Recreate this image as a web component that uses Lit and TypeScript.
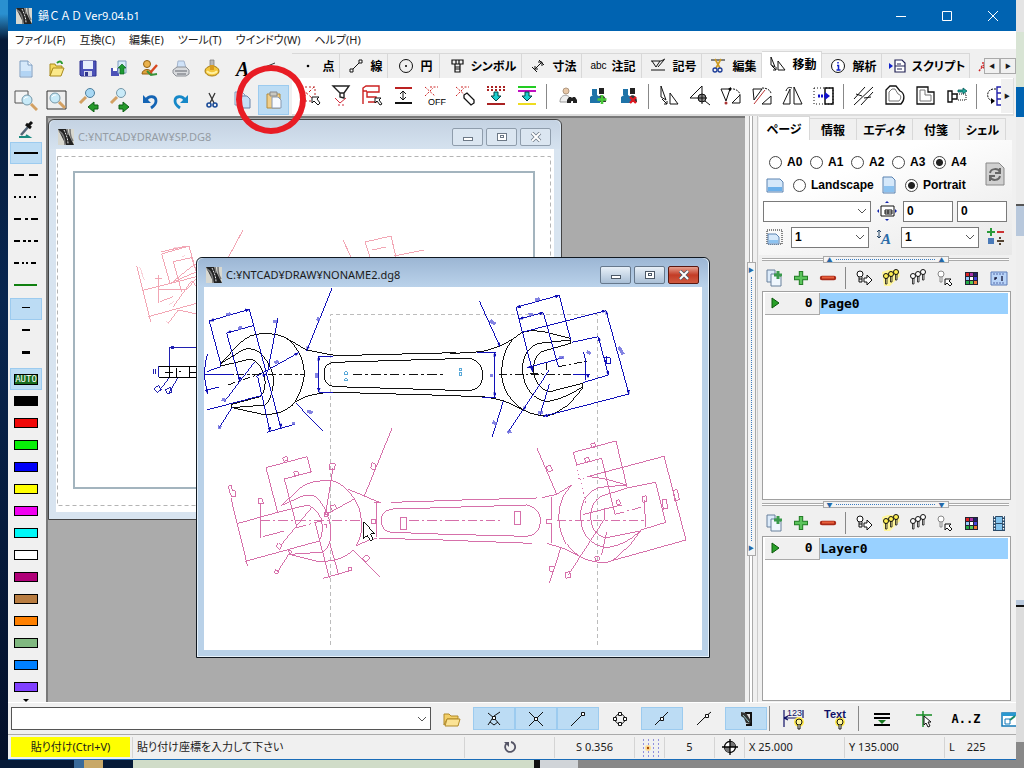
import { LitElement, html, svg, css, nothing } from "lit";
import { customElement, property, state } from "lit/decorators.js";
import { classMap } from "lit/directives/class-map.js";

const K = "#111";
const GLYPHS: Record<string, unknown> = {
  page: svg`<path d="M6 4h8l4 4v12H6z" fill="#d5e8fa" stroke="#7d9cc0"/><path d="M14 4v4h4" fill="#fff" stroke="#7d9cc0"/><path d="M7 14h10v5H7z" fill="#b2d4f4"/>`,
  open: svg`<path d="M5 7h5l1 2h6v3H8l-3 7z" fill="#f5d95e" stroke="#a98a1c"/><path d="M8 11h11l-3 8H5z" fill="#fbe98a" stroke="#a98a1c"/><path d="M12 6c3-3 5-1 5 1" fill="none" stroke="#2a9a30" stroke-width="2"/>`,
  save: svg`<path d="M4 4h16v15H5l-1-1z" fill="#4c52b8" stroke="#2c3090"/><path d="M7 4h10v8H7z" fill="#e8eefc"/><path d="M8 14h8v5H8z" fill="#d5d8ec"/><path d="M9 15h3v4H9z" fill="#30368c"/>`,
  saveup: svg`<path d="M4 11h8v8H4z" fill="#4c52b8"/><path d="M6 11h4v3H6z" fill="#fff"/><path d="M11 4h8v12h-8z" fill="#d8ebf8" stroke="#7d9cc0"/><path d="M15 7l4 4h-2v6h-4v-6h-2z" fill="#1d9a33" stroke="#0c6420" stroke-width=".7"/>`,
  user: svg`<circle cx="9" cy="7" r="3.5" fill="#eab24c" stroke="#936012"/><path d="M4 17c0-6 10-6 10 0z" fill="#e0a23c" stroke="#936012"/><path d="M12 16l7-8" stroke="#d84820" stroke-width="2.4"/><path d="M9 14l4 4 6-1" stroke="#38923a" stroke-width="2" fill="none"/>`,
  print: svg`<path d="M9 4h6l2 7H8z" fill="#cfe2f8" stroke="#a4b4cc"/><path d="M4 13l4-3h9l3 3v4l-3 2H7l-3-3z" fill="#d8dadd" stroke="#8c9096"/><path d="M6 14h12M8 17h9" stroke="#62676e"/>`,
  ring: svg`<path d="M10 3h4v6h-4z" fill="#b8b8b8" stroke="#777" stroke-width=".7"/><ellipse cx="12" cy="14" rx="7" ry="5" fill="#f3c63b" stroke="#a77b12"/><path d="M7 14c2 3 8 3 10 0" fill="none" stroke="#fff0a0" stroke-width="2"/><path d="M10 8h4v5h-4z" fill="#d89b20"/>`,
  letter: svg`<text x="5" y="19" font-size="20" font-weight="bold" font-style="italic" font-family="Liberation Serif" fill="#000">A</text>`,
  line: svg`<path d="M3 10L13 6M3 10h13" stroke="#333"/>`,
  zoomrect: svg`<path d="M1 3h13v12H1z" fill="#f4f4f4" stroke="#555"/><circle cx="13" cy="12" r="5" fill="#c8eaf8" stroke="#7597a8"/><path d="M17 16l6 6" stroke="#d3a062" stroke-width="3"/><path d="M10 11c1-2 3-2 4-2" stroke="#fff" fill="none"/>`,
  zoomall: svg`<path d="M2 3h19v18H2z" fill="#eee" stroke="#333"/><circle cx="10" cy="10" r="5" fill="#c8eaf8" stroke="#7597a8"/><path d="M14 14l6 6" stroke="#d3a062" stroke-width="3"/><path d="M7 9c1-2 3-2 4-2" stroke="#fff" fill="none"/>`,
  zoomprev: svg`<circle cx="14" cy="5" r="4.5" fill="#a8d8f4" stroke="#4e7e9c"/><path d="M10 9l-6 6" stroke="#d3a062" stroke-width="3"/><path d="M12 19l6-5v3h4v4h-4v3z" fill="#259a2b" stroke="#0d5f15"/>`,
  zoomnext: svg`<circle cx="14" cy="5" r="4.5" fill="#c8eaf8" stroke="#7597a8"/><path d="M10 9l-6 6" stroke="#d3a062" stroke-width="3"/><path d="M22 19l-6-5v3h-4v4h4v3z" fill="#259a2b" stroke="#0d5f15"/>`,
  undo: svg`<path d="M5 7v8h8z" fill="#1464b4"/><path d="M8 12c3-5 10-4 10 1 0 3-2 5-5 7" fill="none" stroke="#1464b4" stroke-width="2.8"/>`,
  redo: svg`<path d="M19 7v8h-8z" fill="#1688c8"/><path d="M16 12c-3-5-10-4-10 1 0 3 2 5 5 7" fill="none" stroke="#1688c8" stroke-width="2.8"/>`,
  cut: svg`<path d="M9 5l5 10M15 5l-5 10" stroke="#333" stroke-width="1.3"/><circle cx="9" cy="17" r="2" fill="none" stroke="#1b4c98" stroke-width="1.6"/><circle cx="15" cy="17" r="2" fill="none" stroke="#1b4c98" stroke-width="1.6"/>`,
  copy: svg`<path d="M4 4h7l3 3v10H4z" fill="#e3effb" stroke="#7d9cc0"/><path d="M9 8h7l3 3v9H9z" fill="#c5dff6" stroke="#6a83a8"/>`,
  paste: svg`<path d="M5 6h13v14H5z" fill="#f0cf8a" stroke="#b28b3c"/><path d="M8 4h7v4H8z" fill="#c8c8c0" stroke="#888"/><path d="M10 9h6l3 3v8h-9z" fill="#f7fbff" stroke="#8898b0"/>`,
  selarea: svg`<path d="M3 3h14v14H3z" fill="none" stroke="#b82828" stroke-dasharray="2 2"/><path d="M4 15l4-4M11 8l5-5M4 5l10 9" stroke="#c22" stroke-dasharray="3 2"/><path d="M14 13h7l-2 2 3 4-2 2-4-4-2 2z" fill="#fff" stroke="${K}"/>`,
  filter: svg`<path d="M4 2h16l-5 7v5l-4-1V9zM11 9h4" fill="#fff" stroke="#222" stroke-width="1.4"/><path d="M6 14l5 5 6-5" fill="none" stroke="#d02a3a"/><path d="M9 21h6" stroke="#d02a3a" stroke-dasharray="2 2"/>`,
  chain: svg`<path d="M3 20V4l3-2h13v6H7v5h9v5H8M3 7h4" fill="none" stroke="#cc2020" stroke-width="1.4"/><path d="M15 14h6l-2 2 3 4-2 1-3-4-2 2z" fill="#fff" stroke="${K}"/>`,
  vspace: svg`<path d="M4 4h17" stroke="#b22" stroke-width="2"/><path d="M4 19h17" stroke="${K}" stroke-width="2"/><path d="M12 7v9M9 10l3-3 3 3M9 13l3 3 3-3" fill="none" stroke="${K}"/>`,
  off: svg`<path d="M3 3l10 9M3 12l8-8M8 3h8" stroke="#c22" stroke-dasharray="2 1.5"/><text x="6" y="21" font-size="9" font-family="Liberation Sans" fill="#000">OFF</text>`,
  eraser: svg`<path d="M3 3l10 9M3 12l8-8M8 3h8" stroke="#c22" stroke-dasharray="2 1.5"/><path d="M11 11l3-2 7 7v3l-3 2-7-7z" fill="#fff" stroke="${K}" stroke-width="1.3"/>`,
  dnred: svg`<path d="M3 3h18M3 6h18" stroke="#a22" stroke-width="2" stroke-dasharray="2 2"/><path d="M3 20h18" stroke="#a22" stroke-width="2"/><path d="M10 8h4v4h3l-5 5-5-5h3z" fill="#1cd0d0" stroke="#044"/>`,
  dncol: svg`<path d="M3 3h18" stroke="#22cc22" stroke-width="2"/><path d="M3 7h18" stroke="#c010c0" stroke-width="2"/><path d="M3 20h18" stroke="#eedc20" stroke-width="2"/><path d="M10 8h4v4h3l-5 5-5-5h3z" fill="#1cd0d0" stroke="#044"/>`,
  find: svg`<circle cx="11" cy="7" r="3" fill="#e8c8a8" stroke="#b09880"/><path d="M5 18c0-9 11-9 11 0z" fill="#eee" stroke="#999"/><path d="M12 16l2-3h2l1 1 1-1h2l2 3v3h-4v-2h-2v2h-4z" fill="#222"/>`,
  useradd: svg`<path d="M13 4h5v6h-5z" fill="#222"/><path d="M11 18c0-9 9-9 9 0z" fill="#333"/><path d="M6 5h5v6H6z" fill="#1e73a8"/><path d="M4 19v-6l3-2h4l3 2v6z" fill="#1e73a8"/><path d="M16 11v9M11.500 15.500h9" stroke="#48c838" stroke-width="2.6"/>`,
  userdel: svg`<path d="M13 4h5v6h-5z" fill="#222"/><path d="M11 18c0-9 9-9 9 0z" fill="#333"/><path d="M6 5h5v6H6z" fill="#1e73a8"/><path d="M4 19v-6l3-2h4l3 2v6z" fill="#1e73a8"/><path d="M13 13l6 6M19 13l-6 6" stroke="#e01820" stroke-width="2.4"/>`,
  movetri: svg`<path d="M4 2v11l5 3zM13 9v11h8zM5 15l5 5M10 20v-3M10 20H7" fill="none" stroke="${K}"/>`,
  movetab: svg`<path d="M5 5v8l4 2zM12 9v9h7zM6 14l4 4M10 18v-3M10 18H7" fill="none" stroke="${K}"/>`,
  target: svg`<path d="M2 14L14 2v18M2 14h17" fill="none" stroke="${K}"/><circle cx="14" cy="14" r="4" fill="#888" stroke="${K}"/><path d="M10 14h8M14 10v8M17 17l5 4" stroke="${K}"/>`,
  rot: svg`<path d="M2 5h9L7 17zM13 19h8v-8z" fill="none" stroke="${K}"/><path d="M11 5c6-1 10 3 10 6" fill="none" stroke="${K}" stroke-dasharray="2 1"/><circle cx="7" cy="19" r="1.5" fill="#a33"/><path d="M12 3v4l-3-2z"/>`,
  rot2: svg`<path d="M3 5h9L4 16zM12 20h9V12z" fill="none" stroke="${K}"/><path d="M4 20L15 6" stroke="#b33"/><path d="M12 4c6 0 9 3 9 6" fill="none" stroke="${K}" stroke-dasharray="2 1"/>`,
  mirror: svg`<path d="M9 5v15H2zM13 3l8 17h-8zM5 7c1-4 4-4 6-3" fill="none" stroke="${K}"/>`,
  stretch: svg`<path d="M2 4h19v16H2z" fill="none" stroke="${K}" stroke-dasharray="1 2"/><path d="M13 4h8v16h-8z" fill="none" stroke="${K}" stroke-width="1.5"/><path d="M6 12h8" stroke="#11c" stroke-width="3" stroke-dasharray="2 1"/><path d="M13 8l5 4-5 4z" fill="#11c"/>`,
  offset: svg`<path d="M2 15L13 3M9 21L21 8M2 21L21 3" stroke="${K}"/><path d="M4 10l6 2M12 14l7-1" stroke="${K}"/>`,
  shape1: svg`<path d="M3 6l4-4h6l4 5c5 2 5 9 1 13H3z" fill="none" stroke="${K}" stroke-width="1.3"/><path d="M6 8l3-3h3l3 5c4 1 3 5 1 7H6z" fill="none" stroke="#777"/>`,
  shape2: svg`<path d="M3 3h11v5h6v12H3z" fill="none" stroke="${K}" stroke-width="1.3"/><path d="M6 6h5v5h6v6H6z" fill="none" stroke="#777"/>`,
  bolt: svg`<path d="M3 7h4v11H3zM7 10h5v5H7z" fill="none" stroke="${K}" stroke-width="1.4"/><path d="M12 10h9v6h-9" fill="none" stroke="${K}" stroke-dasharray="1 1"/><path d="M13 6h5V4l4 3-4 3V8h-5z" fill="#1fa99a" stroke="#055" stroke-width=".8"/>`,
  conv: svg`<path d="M11 5H8c-7 1-7 10-1 12" fill="none" stroke="${K}" stroke-dasharray="2 1"/><path d="M12 3h9v18h-9zM12 9h5v6h-5" fill="none" stroke="#22a" stroke-width="1.4"/><path d="M6 14l4 3-4 3z"/>`,
  dot: svg`<circle cx="12" cy="12" r="1.3"/>`,
  seg: svg`<path d="M7 17L17 7" stroke="${K}"/><path d="M6 15h3v3H6zM15 6h3v3h-3z" fill="#fff" stroke="${K}"/>`,
  circle: svg`<circle cx="12" cy="12" r="6.5" fill="none" stroke="${K}"/><circle cx="12" cy="12" r="1"/>`,
  screw: svg`<path d="M7 6h11v4H7zM10 10h5v8h-5zM10 13h5M10 15h5M11 6v4M14 6v4" fill="none" stroke="${K}" stroke-width="1.2"/>`,
  dim: svg`<path d="M9 15l7-7M16 8h-4M16 8v4M9 15h3M9 15v-3M6 13l5 5M13 6l5 5" fill="none" stroke="${K}"/>`,
  mark: svg`<path d="M5 7h10l4-2M6 7l4 6 4-6M5 16h14M12 13l6-7" fill="none" stroke="${K}"/>`,
  scis: svg`<path d="M5 6h14" stroke="${K}"/><path d="M9 5l5 9M15 5l-5 9" stroke="#cc9a22" stroke-width="1.6"/><circle cx="9" cy="16" r="2" fill="none" stroke="#1b3c98" stroke-width="1.3"/><circle cx="14" cy="16" r="2" fill="none" stroke="#1b3c98" stroke-width="1.3"/>`,
  info: svg`<circle cx="12" cy="12" r="6.5" fill="#fff" stroke="${K}"/><path d="M12 8v1.6M11 11.5h1.5V16M10.500 16h4" stroke="#12c" stroke-width="1.5" fill="none"/>`,
  script: svg`<path d="M3 9l4 3-4 3z" fill="#12c"/><path d="M9 6h7l3 3v9H9zM9 12h10M11 10h4M11 15h5" fill="#fff" stroke="#225" stroke-width="1.2"/>`,
  burst: svg`<path d="M9 18L17 8M17 17l-6-4M13 9v2M16 18h-2" stroke="#c22" stroke-width="1.4" stroke-dasharray="2 1"/>`,
  folder: svg`<path d="M4 7h5l2 2h7v3H7l-3 6z" fill="#f3cf68" stroke="#b18a29"/><path d="M7 12h13l-2 7H5z" fill="#fbe395" stroke="#b18a29"/>`,
  snap1: svg`<path d="M6 18l6-9 6-4M6 6l6 5 6 7M8 15l4 3 4-3" fill="none" stroke="${K}"/><path d="M10.500 9.500h3v3h-3z" fill="#fff" stroke="${K}"/>`,
  snap2: svg`<path d="M5 5l14 14M19 5L5 19" stroke="${K}"/><path d="M10.500 10.500h3v3h-3z" fill="#fff" stroke="${K}"/>`,
  snap3: svg`<path d="M5 19L16 8" stroke="${K}"/><path d="M15.500 5.500h3v3h-3z" fill="#fff" stroke="${K}"/>`,
  snap4: svg`<circle cx="12" cy="12" r="5" fill="none" stroke="${K}"/><path d="M10.500 5.500h3v3h-3zM10.500 15.500h3v3h-3zM5.500 10.500h3v3h-3zM15.500 10.500h3v3h-3z" fill="#fff" stroke="${K}"/>`,
  snap5: svg`<path d="M5 18l5-5 8-8" stroke="${K}"/><path d="M10.500 10.500h3v3h-3z" fill="#fff" stroke="${K}"/>`,
  snap6: svg`<path d="M5 18l8-8 6-5" stroke="${K}"/><path d="M13.500 7.500h3v3h-3z" fill="#fff" stroke="${K}"/>`,
  hand: svg`<path d="M11 6h6v12h-5" fill="#ddd" stroke="${K}" stroke-width="2"/><path d="M7 5l5 1 5 8-1 3-4-1-2-5-3-2z" fill="#333"/><path d="M9 8l6 7" stroke="#9cc"/>`,
  dim123: svg`<path d="M3 3v17M22 3v8M3 11h14M3 11l4-2M3 11l4 2" stroke="#116" stroke-width="1.2"/><text x="6" y="9" font-size="9" font-family="Liberation Sans" fill="#116">123</text><circle cx="18" cy="15" r="5" fill="#ffe94a"/><circle cx="18" cy="15" r="3" fill="#fff8a0" stroke="${K}"/><path d="M17 18v4h2v-4" fill="#fff" stroke="${K}"/>`,
  textb: svg`<circle cx="17" cy="15" r="5" fill="#ffe94a"/><text x="1" y="11" font-size="11" font-weight="bold" font-family="Liberation Sans" fill="#116">Text</text><circle cx="17" cy="15" r="3" fill="#fff8a0" stroke="${K}"/><path d="M16 18v4h2v-4" fill="#fff" stroke="${K}"/>`,
  layers: svg`<path d="M4 7h16M4 11h16M4 18h16" stroke="#000" stroke-width="2"/><path d="M8 13h8l-4 4z" fill="#197a22"/>`,
  crosshair: svg`<path d="M4 8h16M11 4v16" stroke="#138a22" stroke-width="1.4"/><path d="M12 9v9l2-2 2 4 2-1-2-4h3z" fill="#fff" stroke="${K}"/>`,
  ext: svg`<path d="M6 6h15v13H6z" fill="#fff" stroke="#1379b8" stroke-width="1.5"/><path d="M6 6h15v3H6z" fill="#2a98d0"/><path d="M9 12h5v5H9z" fill="none" stroke="#1379b8"/><path d="M14 13l5-4" stroke="#1a8a6a" stroke-width="2"/>`,
  pagecopy: svg`<path d="M5 4h8v12H5z" fill="#dcebfa" stroke="#69809c"/><path d="M9 8h8l2 3v9H9z" fill="#f0f7fe" stroke="#69809c"/><path d="M16 5v8M12 9h8" stroke="#3a9a4c" stroke-width="3"/>`,
  plus: svg`<path d="M12 5v14M5 12h14" stroke="#257d28" stroke-width="4.4"/><path d="M12 6v12M6 12h12" stroke="#5cc45c" stroke-width="2.4"/>`,
  minus: svg`<path d="M6 12h12" stroke="#a82a18" stroke-width="4.4" stroke-linecap="round"/><path d="M6 11.500h12" stroke="#e8603c" stroke-width="2"/>`,
  bulbarrow: svg`<circle cx="8" cy="8" r="3" fill="#fff" stroke="${K}"/><path d="M7 11v5h3v-5M7 13h3" fill="none" stroke="${K}"/><path d="M12 12h3V9l5 5-5 5v-3h-3z" fill="#fff" stroke="${K}"/>`,
  bulbson: svg`<path d="M3 6l6-2 11 0 1 6-10 10H5z" fill="#fff69a"/><circle cx="7" cy="10" r="2.5" fill="#ffef50" stroke="${K}"/><circle cx="12" cy="8" r="2.5" fill="#ffef50" stroke="${K}"/><circle cx="17" cy="6" r="2.5" fill="#ffef50" stroke="${K}"/><path d="M6.500 12v6h1.500v-6M11.500 10v6h1.500v-6M16.500 8v6h1.500V8" fill="none" stroke="${K}" stroke-width=".8"/>`,
  bulbsoff: svg`<circle cx="7" cy="10" r="2.5" fill="#fff" stroke="${K}"/><circle cx="12" cy="8" r="2.5" fill="#fff" stroke="${K}"/><circle cx="17" cy="6" r="2.5" fill="#fff" stroke="${K}"/><path d="M6.500 12v6h1.500v-6M11.500 10v6h1.500v-6M16.500 8v6h1.500V8" fill="none" stroke="${K}" stroke-width=".8"/>`,
  bulbpick: svg`<circle cx="8" cy="8" r="3" fill="#fff" stroke="#888"/><path d="M7 11v5h2v-5" fill="none" stroke="#888"/><path d="M12 13h6l-2 2 3 3-2 2-3-3-2 2z" fill="#fff" stroke="${K}"/>`,
  palette: svg`<path d="M5 6h13v13H5z" fill="#223"/><path d="M6 7h3v3H6z" fill="#d22"/><path d="M10 7h3v3h-3z" fill="#a3a"/><path d="M14 7h3v3h-3z" fill="#226"/><path d="M6 11h3v3H6z" fill="#9cf"/><path d="M10 11h3v3h-3z" fill="#fff"/><path d="M14 11h3v3h-3z" fill="#44d"/><path d="M6 15h3v3H6z" fill="#2a4"/><path d="M10 15h3v3h-3z" fill="#5c5"/><path d="M14 15h3v3h-3z" fill="#e73"/>`,
  ruler: svg`<path d="M4 6h16v13H4z" fill="#b9d4f8" stroke="#5a7ab8"/><path d="M7 7v2M10 7v2M13 7v2M16 7v2M7 18v-2M10 18v-2M13 18v-2M16 18v-2" stroke="#5468a8"/><path d="M15 10v5M8 14v-2h2" fill="none" stroke="#113" stroke-width="1.3"/>`,
  film: svg`<path d="M6 5h12v15H6z" fill="#2a4a68"/><path d="M9 6h6v6H9zM9 13h6v6H9z" fill="#83c4ee"/><path d="M7.500 5v15M16.500 5v15" stroke="#fff" stroke-width="1.3" stroke-dasharray="1.500 1.500"/>`,
  land: svg`<path d="M4 6h13l3 3v10H4z" fill="#d5e8fa" stroke="#5a82b0"/><path d="M5 14h14v4H5z" fill="#6cb0ea"/>`,
  port: svg`<path d="M6 4h9l3 3v13H6z" fill="#d5e8fa" stroke="#5a82b0"/><path d="M7 13h10v6H7z" fill="#8cc2f0"/>`,
  refresh: svg`<path d="M3 1h13l5 5v17H3z" fill="#d0d0d0" stroke="#888"/><path d="M7 11c1-5 8-5 10-1M17 6v5h-5M17 14c-1 5-8 5-10 1M7 19v-5h5" fill="none" stroke="#666" stroke-width="2"/>`,
  margins: svg`<path d="M6 7h13v10H6zM10 11h7v4h-7zM13 11v4M10 13h7" fill="#fff" stroke="${K}"/><path d="M12 2l2 2h-4zM12 22l2-2h-4zM2 12l2-2v4zM22 12l-2-2v4z" fill="#12a"/>`,
  scale: svg`<path d="M4 5h15v14H4z" fill="none" stroke="${K}" stroke-dasharray="1 1"/><path d="M5 9h8l3 3v7H5z" fill="#d5e8fa" stroke="#5a82b0"/><path d="M6 15h9v3H6z" fill="#8cc2f0"/>`,
  fontsz: svg`<path d="M6 5v8M4 7l2-2 2 2M4 11l2 2 2-2" fill="none" stroke="#246"/><text x="8" y="19" font-size="15" font-weight="bold" font-style="italic" font-family="Liberation Serif" fill="#2b6ba8">A</text>`,
  calc: svg`<path d="M8 3v8M4 7h8" stroke="#2a9a3a" stroke-width="2"/><path d="M14 7h7" stroke="#c33" stroke-width="2"/><path d="M5 13h6v6H5z" fill="#4a7ab8"/><path d="M14 16h7M17 12v2M17 18v2" stroke="#543" stroke-width="2"/>`,
  spin: svg`<path d="M8.500 8.500A5 5 0 1 0 13 7" fill="none" stroke="#556" stroke-width="1.800"/><path d="M6 7h5v5z" fill="#556"/>`,
  grid: svg`<path d="M5 5h16M5 9h16M5 13h16M5 17h16M5 21h16" stroke="#33c" stroke-dasharray="1 4"/><circle cx="10" cy="13" r="3" fill="#fddf9a"/><circle cx="10" cy="13" r="1.2" fill="#a40"/>`,
  origin: svg`<circle cx="12" cy="12" r="5.5" fill="#fff" stroke="#000" stroke-width="1.3"/><path d="M12 12V6.500A5.500 5.500 0 0 1 17.500 12zM12 12v5.500A5.500 5.500 0 0 1 6.500 12z" fill="#777"/><path d="M4 12h16M12 4v16" stroke="#000" stroke-width="1.3"/>`,
  dropper: svg`<path d="M7 17l7-8" stroke="#567" stroke-width="2.5"/><path d="M12 6l5 4M14 8l4-4" stroke="#111" stroke-width="3"/><path d="M5 19h10l-3-2" stroke="#188a80" stroke-width="2" fill="none"/>`,
  app: svg`<path d="M4 4h16v16H4z" fill="#d8d8d0"/><path d="M4 4h8l8 16h-8z" fill="#222"/><path d="M5 6c5 3 6 8 6 14M13 4l1 6M16 4c0 4 0 8 3 12" stroke="#777" fill="none" stroke-width="1.5"/><path d="M10 5c2 4 4 9 4 14" stroke="#eee" fill="none" stroke-dasharray="2 1"/>`,
};

@customElement("cad-icon")
class CadIcon extends LitElement {
  @property() name = "";
  static styles = css`
    :host { display: block; width: 24px; height: 24px; flex: none; }
    svg { display: block; width: 24px; height: 24px; }
  `;
  render() {
    return html`<svg viewBox="0 0 24 24" aria-hidden="true">${GLYPHS[this.name] ?? nothing}</svg>`;
  }
}

const FILE_ROW = ["page", "open", "save", "saveup", "user", "print", "ring", "letter", "line"];
const EDIT_ROW = ["zoomrect", "zoomall", "zoomprev", "zoomnext", "undo", "redo", "cut", "copy", "paste"];
const MOVE_ROW = ["selarea", "filter", "chain", "vspace", "off", "eraser", "dnred", "dncol", "|", "find", "useradd", "userdel", "|",
  "movetri", "target", "rot", "rot2", "mirror", "stretch", "|", "offset", "shape1", "shape2", "bolt", "|", "conv"];
const TABS: [string, string, number][] = [["dot", "点", 48], ["seg", "線", 48], ["circle", "円", 52], ["screw", "シンボル", 82], ["dim", "寸法", 60],
  ["abc", "注記", 60], ["mark", "記号", 60], ["scis", "編集", 60], ["movetab", "移動", 60], ["info", "解析", 60], ["script", "スクリプト", 88]];
const MENUS = ["ファイル(F)", "互換(C)", "編集(E)", "ツール(T)", "ウインドウ(W)", "ヘルプ(H)"];
const COLORS = ["#000000", "#f00808", "#08f008", "#0000f8", "#ffff00", "#f000f0", "#00f8f8", "#ffffff", "#b00078", "#b87c40", "#ff8000", "#80b880", "#0080ff", "#8040ff"];
const DASHES = ["", "10 5", "2 3", "7 4 3 3", "6 3 3 2 3 3", "5 3 2 2 2 3"];
const BOTTOM = ["folder", "*snap1", "*snap2", "*snap3", "snap4", "*snap5", "snap6", "*hand", "|", "dim123", "textb", "|", "layers", "crosshair", "A..Z", "ext"];

const sheetBack = svg`
  <rect x="57.500" y="156.500" width="493" height="349" fill="none" stroke="#b4b4b4" stroke-dasharray="4 3"/>
  <rect x="74" y="172" width="460" height="316" fill="none" stroke="#a3b4be" stroke-width="2"/>
  <g class="third pale" transform="translate(0 110) scale(.33333)">
    <path d="M485 432L567 408 590 490M485 432L510 520M520 455L575 443 590 490M520 455L545 545M410 468L452 635M425 542L590 500M445 620L590 580M475 495V580M465 505H485M480 575L520 560M505 640L535 600 590 612M510 520L590 485M520 590L575 512 590 530M475 538H560L590 505M520 515Q560 480 590 460"/>
    <path d="M418 470l10 22M425 490l8 20M520 415l14 -4M545 440l10 -3M508 585l14 -12M498 635l10 6" stroke-width="8" opacity=".5"/>
  </g>
  <path class="pale" d="M243 230L228 258M161 252L186 246M365 242L391 236 396 257M365 242L370 257M372 250L386 247M343 240L351 257M394 256L424 250"/>
  <g class="third navy" transform="translate(0 110) scale(.33333)">
    <path d="M590 712H510V770M475 770H482M475 770V802M460 778v14M467 778v14M510 800L478 842M535 800L508 848"/>
    <path d="M510 712l10-5v10zM462 835l14-8 8 12-12 8zM496 840l14-8 6 14-12 6z" fill="#2020b0"/>
    <path d="M478 770H590M478 802H590M510 770V802M495 788H518M530 775V805M536 786h8M568 770V802M568 788H590" stroke="#000" stroke-width="4"/>
  </g>`;

const sheetFront = svg`
  <path d="M330.500 645V314.500H597.500V648" fill="none" stroke="#bcbcbc" stroke-dasharray="4 3"/>
  <g class="third ink" transform="translate(196 255) scale(.33333)">
    <path d="M75 325C110 290 125 262 165 242 200 232 240 234 268 248 300 268 325 310 325 360 320 400 308 425 290 450 265 470 240 480 200 478L108 458"/>
    <path d="M75 325L140 285Q165 275 190 292C225 325 235 360 232 385 228 415 222 440 208 450L108 458V448L195 424C215 395 210 350 185 325Q175 312 160 313L75 333V318"/>
    <path d="M268 248L332 285 420 302 780 293M300 440Q340 412 420 412L780 422M780 311L415 322C390 325 385 335 385 358 385 385 395 392 420 395L780 406"/>
    <path d="M470 358H745" stroke-dasharray="28 10 8 10"/>
    <path d="M25 358H325M95 390L205 352" stroke-dasharray="24 8 8 8"/>
    <path class="blue" d="M40 198L160 163 255 520M40 198L75 330M92 234L172 212M92 234L132 380M246 188L215 350M180 365L308 293M408 100L332 288M411 304H368V412H411M34 298C22 340 24 380 36 418M32 350L75 335M25 358H110M30 406L70 396M32 465L195 422M185 365L222 530M212 532L296 508M85 440L175 322M68 520L110 455M300 445L380 527"/>
    <path class="label" d="M92 180l12-4M126 221l12-4M232 200h12M236 324l12-6M362 190l10 6M362 354v14M78 432l12 5M66 516l10 2M334 468l16 6M288 506h10"/>
    <path class="arrow" d="M40 198l12-8 2 9zM160 163l-12 -1 3 9zM92 234l10-8 2 8zM332 288l0-14 8 3zM368 304l-4 12h9zM368 412l-4-12h9zM308 293l-13 3 5 7zM222 530l-6-12 9-2zM255 520l-6-12 9-2zM132 380l-6-12 9-2zM36 418l-8-12 8-2zM212 356l-14 3 5 7z"/>
    <path d="M446 350h8v10h-8zM446 371h8v7h-8z" stroke="#58a8d8"/>
  </g>
  <g class="third ink" transform="translate(450 255) scale(.33333)">
    <path d="M0 296L95 290Q150 278 195 248L215 232Q245 222 280 230L362 250V265M195 245C160 285 155 320 155 360 158 400 180 440 220 465 250 480 280 486 310 478L355 450Q385 415 398 400V385"/>
    <path d="M362 255L265 265C225 280 215 320 218 350 222 400 250 432 290 440Q350 430 398 395M362 265L275 290C245 310 248 350 255 370Q270 405 300 410L398 385M0 422L100 425Q150 432 180 445L220 465M0 310H60C85 318 98 335 98 358 98 385 85 405 60 406H0"/>
    <path d="M147 358H370M325 335L410 318M240 355H275M290 325V345" stroke-dasharray="24 8 8 8"/>
    <path class="blue" d="M88 138L150 275M198 157L328 121 362 255M198 157L248 350M208 192L280 173 325 335M215 232L468 167 537 417 280 484M365 262L445 245 475 360 398 383M232 338L340 308M400 290L408 318V375M370 358H420M80 292H137M134 292V425M95 427H137M160 438L127 545M175 530L298 345M270 480L298 388"/>
    <path class="label" d="M255 135l14-4M236 180l12-3M120 196l16 12M120 362h10M328 308h14M410 290l12 6M506 276l14 22M128 500l12 8M264 474l14-3M172 532l12-4"/>
    <path d="M464 306l16 3 3 17-17-3zM469 303v24" stroke="#1010b8"/>
    <path class="arrow" d="M198 157l12-7 2 8zM328 121l-12 0 2 8zM208 192l10-7 2 8zM280 173l-11-1 2 8zM468 167l-12-1 2 8zM468 167l-1 12 8-2zM537 417l-7-10 9-2zM475 360l-7-10 9-2zM445 245l-1 12 8-2zM134 292l-4 12h9zM134 425l-4-12h9zM150 275l-8-9 7-3zM248 350l-7-12 9-2zM232 338l12-7 2 8zM280 484l11-8 2 9zM414 370l-5-12h9zM220 466l2-12 7 4z"/>
    <path d="M28 340h8v7h-8zM28 353h8v8h-8z" stroke="#58a8d8"/>
  </g>
  <g class="third rose" transform="translate(196 425) scale(.33333)">
    <path d="M345 140L333 95 210 128 245 262M348 140L265 162 303 308M105 220L155 424M123 296L245 262M148 409L370 348M193 235V340M200 335L265 318M255 360L345 250M245 440L282 382M411 130L388 270 478 220M588 10L505 213M470 375L552 455M382 460L465 436M358 295L400 460M400 350L428 450"/>
    <path d="M255 242L320 183Q350 165 405 167C440 172 480 215 492 260 500 300 500 330 480 362M280 388L360 408C410 412 450 400 470 375M255 242L320 213Q350 205 365 220C400 260 408 300 402 350Q395 375 375 382L280 388M245 262L335 240Q360 250 375 280 385 320 370 348M455 192L505 213 550 232M542 232V335M480 362L520 345 542 340M534 234h20M585 232L780 226M550 340L780 346M780 247L590 252C565 255 556 270 556 287 556 310 570 322 590 322L780 329M613 277h19v36h-19zM526 283h13v12h-13z"/>
    <path d="M193 286H500M640 286H780M303 308L385 285" stroke-dasharray="28 9 8 9"/>
    <path d="M260 98l12-4 4 12-12 3zM293 141l12-3 3 12-12 3zM97 184l8-3 4 14 10 4v14l-12 3-6-14zM187 222h12l3 14h-14zM402 116h16l-3 18h-14zM528 113l12 6-4 16-12-5zM403 243l14-4 6 12-14 6zM247 353l10 10-6 10-10-8zM238 434l12 6-6 8-8-4zM500 400l12-10 10 10-12 12zM277 376l10 3-4 10zM457 428l8-2 2 10-8 2zM385 264l12-2v12l-12 2zM372 284l8 8M384 300h8v10"/>
    <path class="pointer" d="M502 290V342L514 331 523 347 531 343 524 327H538Z"/>
  </g>
  <g class="third rose" transform="translate(450 425) scale(.33333)">
    <path d="M0 226L260 219M0 346L245 355M0 247L230 240C260 248 271 265 271 286 271 310 260 330 230 334L0 328M193 259h19v39h-19zM260 68L320 208M275 218L320 208 365 180M305 215V283H289V295H305V355M290 355L340 370 390 395M332 370L298 475"/>
    <path d="M365 182C335 210 325 245 327 286 330 340 360 380 400 400 430 412 470 418 490 405L540 360 572 318M380 120L370 82 498 48 532 190M380 120L455 100 495 268M412 155L642 94 708 345 475 410M535 188L617 172 647 292 570 316M412 155Q450 155 530 180L450 187C405 200 390 240 392 280 395 330 420 360 470 368Q530 360 570 318L470 338C440 335 420 310 422 265Q425 235 450 215L535 188M400 268L515 240M583 225L587 305M355 450L465 280V250M455 390L470 320"/>
    <path d="M380 120L408 235M385 160H402" stroke-dasharray="4 10"/>
    <path d="M0 286H150M320 286H590M495 268L580 245" stroke-dasharray="28 9 8 9"/>
    <path d="M422 57l12-4 4 12-12 3zM404 100l12-3 3 12-12 3zM288 125l12-4 8 14-12 7zM498 228l10-4 4 12-10 4zM576 215l12-3 3 16-12 4zM636 225l12-2 6 26-14 4zM670 196l12-2 6 30-14 4zM299 423l14 2-2 14h-12zM347 442l12-2 3 16-14 4zM434 396l12-2 3 10-12 4z"/>
  </g>`;

@customElement("app-root")
class AppRoot extends LitElement {
  @state() private tab = 8;
  @state() private size = "A4";
  @state() private orient = "Portrait";

  static styles = css`
    :host {
      display: block; height: 100vh; box-sizing: border-box; overflow: hidden; padding: 0 8px 8px; position: relative;
      font: 12px/16px "Noto Sans", "Noto Sans CJK JP", sans-serif; color: #1a1a1a;
      background:
        linear-gradient(#e4e4e4 0 32px, #d8e4d4 32px 87px, #0063b1 87px 117px, #ececec 117px 204px, #555 204px 206px, #b8c8dc 206px 236px, #eee 236px 600px, #b8c8dc 600px 605px, #111 605px 607px, #dcdcdc 607px 742px, #888 742px) right / 8px 100% no-repeat,
        linear-gradient(90deg, #061a38 0 74px, #3a6a9a 74px 84px, #c8a868 84px 103px, #061a38 103px 133px, #d0dcc8 133px 534px, #111 534px 540px, #d0d4d8 540px 578px, #888 578px) bottom / 100% 8px no-repeat,
        linear-gradient(#2a90d0 0 14px, #061a38 40px, #082650 300px, #040f28);
    }
    * { box-sizing: border-box; }
    button { font: inherit; color: inherit; border: 0; padding: 0; margin: 0; background: none; display: flex; align-items: center; justify-content: center; }
    .frame { display: flex; flex-direction: column; height: 100%; background: #f0f0f0; border-bottom: 1px solid #1a6cb8; }
    .title { height: 31px; flex: none; background: #0063b1; color: #fff; display: flex; align-items: center; padding-left: 4px; }
    .title cad-icon { margin-right: 2px; }
    .title h1 { flex: 1; font: 11px/16px "Noto Sans", "Noto Sans CJK JP", sans-serif; margin: 0; }
    .title button { width: 46px; height: 31px; }
    .menu { height: 18px; flex: none; background: #fff; display: flex; gap: 14px; padding-left: 7px; font-size: 11px; line-height: 18px; font-feature-settings: "palt"; }
    .menu button { color: #222; }
    .ribbon { height: 67px; flex: none; display: flex; padding-top: 2px; }
    .quick { flex: none; padding: 2px 3px 0 2px; }
    .row { display: flex; align-items: center; }
    .quick .row { height: 31px; }
    .cell { width: 31px; height: 30px; flex: none; }
    .on { background: #bcdcf4; outline: 1px solid #9ccbef; outline-offset: -1px; }
    .sep { width: 1px; height: 25px; margin: 0 4px; background: #888; flex: none; }
    .tabbed { flex: 1; min-width: 0; display: flex; flex-direction: column; }
    .tabs { display: flex; height: 27px; flex: none; align-items: flex-end; }
    .tab { height: 25px; flex: none; border: solid #d8d8d8; border-width: 1px 1px 0 0; font: bold 12px/16px "Noto Sans CJK JP", sans-serif; font-feature-settings: "palt"; color: #000; gap: 2px; }
    .tab.sel { background: #fff; height: 27px; padding-bottom: 2px; }
    .tab .abc { font: 10px/16px "Liberation Sans", sans-serif; width: 22px; }
    .cut { flex: 1; min-width: 0; overflow: hidden; height: 25px; }
    .pager { display: flex; padding-bottom: 4px; }
    .pager button { width: 16px; height: 16px; border: 1px solid #aaa; font-size: 6px; line-height: 14px; }
    .tools { flex: 1; display: flex; align-items: center; background: #fff; border: 1px solid #ddd; border-width: 0 1px 2px 0; padding-left: 2px; margin-right: 2px; }
    .strip { flex: 1; min-width: 0; display: flex; align-items: center; overflow: hidden; }
    .more { height: 34px; width: 12px; background: #f0f0f0; font-size: 6px; flex: none; }
    .ring { position: absolute; left: 236px; top: 65px; width: 70px; height: 69px; border: 6px solid #e81c24; border-radius: 50%; pointer-events: none; }
    .middle { flex: 1; min-height: 0; display: flex; }
    .palette { width: 38px; flex: none; padding: 2px 4px 0 2px; }
    .palette button { width: 32px; height: 22px; }
    .palette .drop { height: 24px; }
    .palette .gap { margin-top: 2px; }
    .palette .gap4 { margin-top: 4px; }
    .swatch { width: 24px; height: 10px; border: 1px solid #000; }
    .auto { background: #1a6c20; border: 1px solid #000; color: #fff; font: 9px/9px "DejaVu Sans Mono", monospace; width: 24px; height: 11px; }
    .down { height: 5px; display: grid; place-items: center; }
    .mdi { flex: 1; min-width: 0; background: #ababab; border: 2px solid #787878; border-width: 2px 0 0 2px; position: relative; overflow: hidden; }
    .child { position: absolute; border: 1px solid #444; border-radius: 6px 6px 0 0; background: #dae6f2; padding: 0 7px 7px; }
    .child svg { display: block; }
    .back { left: 0; top: 1px; color: #959ca4; background: #d8e4f0; }
    .front { left: 148px; top: 139px; border-color: #101820; background: #b9d1e8; box-shadow: inset 0 0 0 1px #e6f1fa; }
    .bar { height: 29px; display: flex; align-items: center; background: linear-gradient(#c4d2e2, #d5e2ef); margin: 0 -6px; padding: 5px 9px 0 4px; border-radius: 6px 6px 0 0; font-size: 11px; }
    .front .bar { background: linear-gradient(#9cb6d4, #bad2ea); }
    .bar span { flex: 1; }
    .bar button { width: 31px; height: 18px; margin-left: 3px; border: 1px solid #66788c; border-radius: 2px; background: linear-gradient(#e8f0f8, #a9bfd6); }
    .back .bar button { background: #dbe6f1; border-color: #8f9dac; }
    .front .bar .close { background: linear-gradient(#e6a190, #c33c26 50%, #d05a40); border-color: #5a1810; }
    .sheet { background: #fff; }
    .third path { stroke-width: 3; fill: none; }
    .third, .pale { shape-rendering: crispEdges; fill: none; }
    .pale { stroke: #f2a6b4; }
    .navy { stroke: #2020b0; }
    .ink { stroke: #111; }
    .rose { stroke: #d670aa; }
    .third .blue { stroke: #1010b8; }
    .third .label { stroke: #6464dc; stroke-width: 10; opacity: .8; }
    .third .arrow { fill: #1010b8; stroke: #1010b8; stroke-width: 1; }
    .third .pointer { fill: #fff; stroke: #111; }
    .vsplit { width: 12px; flex: none; display: flex; flex-direction: column; align-items: center; }
    .vline { flex: 1; width: 4px; border: solid #aaa; border-width: 0 1px; background: #fff; }
    .vgrip { height: 294px; width: 9px; border: 1px solid #aaa; background: #f4f4f4; display: flex; flex-direction: column; align-items: center; justify-content: space-between; color: #2468a8; font-size: 6px; line-height: 14px; }
    .vgrip i, .hgrip i { flex: 1; border: 0 dotted #3a7cc0; }
    .vgrip i { border-left-width: 1px; }
    .side { width: 259px; flex: none; display: flex; flex-direction: column; padding: 0 4px 1px 1px; border-left: 1px solid #ccc; }
    .side .tabs { height: 24px; }
    .side .tab { height: 22px; padding: 0; }
    .side .tab.sel { height: 24px; }
    .setup { background: linear-gradient(160deg, #fff 30%, #e8e8e8); padding: 11px 5px 7px 4px; display: flex; flex-direction: column; font: bold 12px/16px "Liberation Sans", sans-serif; color: #000; }
    .sizes { display: flex; justify-content: space-between; }
    .radios { display: grid; gap: 1px; }
    .radios .row { height: 22px; }
    label.r { display: flex; align-items: center; gap: 5px; width: 41px; padding-left: 6px; }
    label.wide { width: 90px; }
    label.fit { width: 70px; padding-left: 4px; }
    input[type="radio"] { appearance: none; width: 13px; height: 13px; flex: none; margin: 0; border: 1px solid #444; border-radius: 50%; background: #fff; }
    input[type="radio"]:checked { background: radial-gradient(#222 0 3px, #fff 4px); }
    .fields { height: 22px; display: flex; align-items: center; gap: 4px; margin-top: 4px; justify-content: space-between; }
    .box { display: grid; flex: 1; min-width: 0; align-items: center; }
    .box select, .box svg { grid-area: 1 / 1; }
    .box svg { justify-self: end; margin-right: 4px; pointer-events: none; }
    select, input.num { appearance: none; width: 100%; height: 21px; border: 1px solid #7a7a7a; border-radius: 0; background: #fff; padding: 0 3px; font: inherit; color: #000; }
    input.num { width: 50px; }
    .split { height: 9px; flex: none; display: flex; align-items: center; padding: 0 3px; }
    .rule { flex: 1; height: 3px; border: solid #aaa; border-width: 1px 0; background: #fff; }
    .hgrip { width: 126px; height: 7px; border: 1px solid #aaa; background: #f4f4f4; display: flex; align-items: center; padding: 0 3px; color: #2468a8; font-size: 6px; gap: 3px; }
    .hgrip i { border-top-width: 1px; }
    .acts { height: 27px; flex: none; padding-left: 1px; }
    .acts button { width: 27px; height: 26px; }
    .acts .sep { height: 22px; }
    .list { flex: 1; background: #fff; border: 1px solid #a0a0a0; margin: 0 1px 0 3px; padding: 1px 2px; min-height: 0; }
    .list.tall { flex: none; height: 209px; }
    table { border-collapse: collapse; width: 100%; font: bold 13px/20px "DejaVu Sans Mono", monospace; color: #000; }
    td { padding: 0 1px; background: #99d1ff; height: 21px; }
    td:first-child { width: 54px; background: #f0f0f0; border: solid #aaa; border-width: 0 1px 1px 0; padding: 0 6px 0 6px; }
    td div { display: flex; justify-content: space-between; align-items: center; }
    .bottom { height: 33px; flex: none; display: flex; align-items: center; padding-left: 3px; border-bottom: 1px solid #aaa; border-top: 1px solid #fff; overflow: hidden; }
    .bottom .box { flex: 1 0 420px; }
    .bottom select { height: 23px; border-color: #555; }
    .bottom button { width: 42px; height: 23px; flex: none; color: #000; }
    .bottom .sep { margin: 0 2px; }
    .az { font: bold 12px/16px "DejaVu Sans Mono", monospace; }
    .status { height: 24px; flex: none; display: flex; align-items: center; font-size: 11px; font-feature-settings: "palt"; padding: 0 2px 0 3px; }
    .status > div { height: 21px; display: flex; align-items: center; flex: none; padding: 0 4px; border-left: 1px solid #d4d4d4; white-space: pre; }
    .status > .mode { background: #ff0; width: 119px; height: 20px; justify-content: center; border: 0; margin-right: 2px; }
    .status > .msg { flex: 1; min-width: 0; }
    .status > .c { justify-content: center; }
    .w30 { width: 30px; } .w50 { width: 50px; } .w80 { width: 80px; } .w90 { width: 90px; } .w100 { width: 100px; } .w70 { width: 70px; }
    .status .w70 { gap: 12px; }
  `;

  private tool(n: string, cls = "cell") {
    if (n === "|") return html`<span class="sep"></span>`;
    const on = n.startsWith("*") || n === "paste";
    const name = n.replace("*", "");
    return html`<button class=${cls + (on ? " on" : "")} aria-label=${name}>${name === "A..Z" ? html`<span class="az">A..Z</span>` : html`<cad-icon name=${name}></cad-icon>`}</button>`;
  }

  private combo(value: string, label: string) {
    return html`<div class="box"><select aria-label=${label}><option>${value}</option></select>
      <svg width="10" height="6" viewBox="0 0 10 6"><path d="M1 1l4 4 4-4" fill="none" stroke="#555"/></svg></div>`;
  }

  private radio(group: "size" | "orient", value: string, cls = "") {
    return html`<label class="r ${cls}"><input type="radio" name=${group} .checked=${this[group] === value} @change=${() => (this[group] = value)} />${value}</label>`;
  }

  private winButtons(dim: boolean) {
    const c = dim ? "#6c7886" : "#4c5866";
    return html`<button aria-label="minimize"><svg width="12" height="10"><rect x="1.5" y="5.5" width="9" height="3" fill="#fff" stroke=${c} /></svg></button>
      <button aria-label="maximize"><svg width="12" height="10"><rect x="1.5" y="1.5" width="9" height="7" fill="#fff" stroke=${c} /><rect x="4.5" y="3.500" width="3" height="2" fill="#fff" stroke=${c} /></svg></button>
      <button class="close" aria-label="close"><svg width="12" height="10"><path d="M2 1l8 8M10 1L2 9" stroke=${c} stroke-width="3.5"/><path d="M2 1l8 8M10 1L2 9" stroke="#fff" stroke-width="2"/></svg></button>`;
  }

  private split(ch: string) {
    return html`<div class="split"><span class="rule"></span><span class="hgrip">${ch}<i></i>${ch}</span><span class="rule"></span></div>`;
  }

  private list(last: string, text: string, tall: boolean) {
    return html`<div class="row acts">${["pagecopy", "plus", "minus", "|", "bulbarrow", "bulbson", "bulbsoff", "bulbpick", "palette", last].map((n) => this.tool(n, ""))}</div>
      <div class="list ${tall ? "tall" : ""}"><table><tbody><tr>
        <td><div><svg width="9" height="12"><path d="M1 1l7 5-7 5z" fill="#28a028" stroke="#0c580c"/></svg>0</div></td><td>${text}</td>
      </tr></tbody></table></div>`;
  }

  render() {
    return html`
      <div class="frame">
        <header class="title">
          <cad-icon name="app"></cad-icon><h1>鍋ＣＡＤ Ver9.04.b1</h1>
          <button aria-label="minimize"><svg width="12" height="12"><path d="M1 6.500h10" stroke="#fff"/></svg></button>
          <button aria-label="maximize"><svg width="12" height="12"><path d="M1.500 1.500h9v9h-9z" stroke="#fff" fill="none"/></svg></button>
          <button aria-label="close"><svg width="12" height="12"><path d="M1 1l10 10M11 1L1 11" stroke="#fff"/></svg></button>
        </header>
        <nav class="menu">${MENUS.map((m) => html`<button>${m}</button>`)}</nav>
        <div class="ribbon">
          <div class="quick">
            <div class="row">${FILE_ROW.map((n) => this.tool(n))}</div>
            <div class="row">${EDIT_ROW.map((n) => this.tool(n))}</div>
          </div>
          <div class="tabbed">
            <div class="tabs">
              ${TABS.map(([i, t, w], k) => html`<button class=${classMap({ tab: true, sel: k === this.tab })} style="width:${w}px" @click=${() => (this.tab = k)}>
                ${i === "abc" ? html`<span class="abc">abc</span>` : html`<cad-icon name=${i}></cad-icon>`}${t}</button>`)}
              <span class="cut"><cad-icon name="burst"></cad-icon></span>
              <span class="pager"><button>◀</button><button>▶</button></span>
            </div>
            <div class="tools"><div class="strip">${MOVE_ROW.map((n) => this.tool(n))}</div><button class="more">▶</button></div>
          </div>
        </div>
        <div class="middle">
          <div class="palette">
            <button class="drop" aria-label="dropper"><cad-icon name="dropper"></cad-icon></button>
            ${DASHES.map((d, k) => html`<button class=${k ? "" : "on"} aria-label="line style"><svg width="24" height="4"><path d="M0 2h24" stroke="#000" stroke-width="2" stroke-dasharray=${d || "none"} /></svg></button>`)}
            <button aria-label="guide line"><svg width="24" height="4"><path d="M0 2h23" stroke="#108010" stroke-width="2"/></svg></button>
            ${[1, 2, 3].map((w) => html`<button class=${w === 1 ? "on gap" : ""} aria-label="line width"><svg width="8" height="4"><rect y="0" width="8" height=${w} /></svg></button>`)}
            <button class="on gap4"><span class="auto">AUTO</span></button>
            ${COLORS.map((c) => html`<button aria-label="colour"><span class="swatch" style="background:${c}"></span></button>`)}
            <div class="down"><svg width="6" height="3"><path d="M0 0h6l-3 3z"/></svg></div>
          </div>
          <main class="mdi">
            <section class="child back">
              <div class="bar"><cad-icon name="app"></cad-icon><span>C:¥NTCAD¥DRAW¥SP.DG8</span>${this.winButtons(true)}</div>
              <svg class="sheet" width="498" height="363" viewBox="56 149 498 363">${sheetBack}</svg>
            </section>
            <section class="child front">
              <div class="bar"><cad-icon name="app"></cad-icon><span>C:¥NTCAD¥DRAW¥NONAME2.dg8</span>${this.winButtons(false)}</div>
              <svg class="sheet" width="498" height="363" viewBox="204 287 498 363">${sheetFront}</svg>
            </section>
          </main>
          <div class="vsplit"><span class="vline"></span><span class="vgrip">▶<i></i>▶</span><span class="vline"></span></div>
          <aside class="side">
            <div class="tabs">
              ${([["ページ", 51], ["情報", 47], ["エディタ", 56], ["付箋", 47], ["シェル", 46]] as [string, number][]).map(([t, w], k) => html`<button class=${classMap({ tab: true, sel: k === 0 })} style="width:${w}px">${t}</button>`)}
            </div>
            <div class="setup">
              <div class="sizes">
                <div class="radios">
                  <div class="row">${["A0", "A1", "A2", "A3", "A4"].map((s) => this.radio("size", s))}</div>
                  <div class="row"><cad-icon name="land"></cad-icon>${this.radio("orient", "Landscape", "wide")}<cad-icon name="port"></cad-icon>${this.radio("orient", "Portrait", "fit")}</div>
                </div>
                <button aria-label="refresh"><cad-icon name="refresh"></cad-icon></button>
              </div>
              <div class="fields">${this.combo("", "paper")}<cad-icon name="margins"></cad-icon><input class="num" aria-label="x" value="0" /><input class="num" aria-label="y" value="0" /></div>
              <div class="fields"><cad-icon name="scale"></cad-icon>${this.combo("1", "scale")}<cad-icon name="fontsz"></cad-icon>${this.combo("1", "text scale")}<cad-icon name="calc"></cad-icon></div>
            </div>
            ${this.split("▲")}${this.list("ruler", "Page0", true)}
            ${this.split("▼")}${this.list("film", "Layer0", false)}
          </aside>
        </div>
        <div class="bottom">${this.combo("", "command")}${BOTTOM.map((n) => this.tool(n, ""))}</div>
        <footer class="status">
          <div class="mode">貼り付け(Ctrl+V)</div><div class="msg">貼り付け座標を入力して下さい</div>
          <div class="c w90"><cad-icon name="spin"></cad-icon></div><div class="c w80">S 0.356</div><div class="c w30"><cad-icon name="grid"></cad-icon></div>
          <div class="c w50">5</div><div class="c w30"><cad-icon name="origin"></cad-icon></div>
          <div class="w100">X 25.000</div><div class="w100">Y 135.000</div><div class="w70"><span>L</span><span>225</span></div>
        </footer>
      </div>
      <div class="ring"></div>`;
  }
}
